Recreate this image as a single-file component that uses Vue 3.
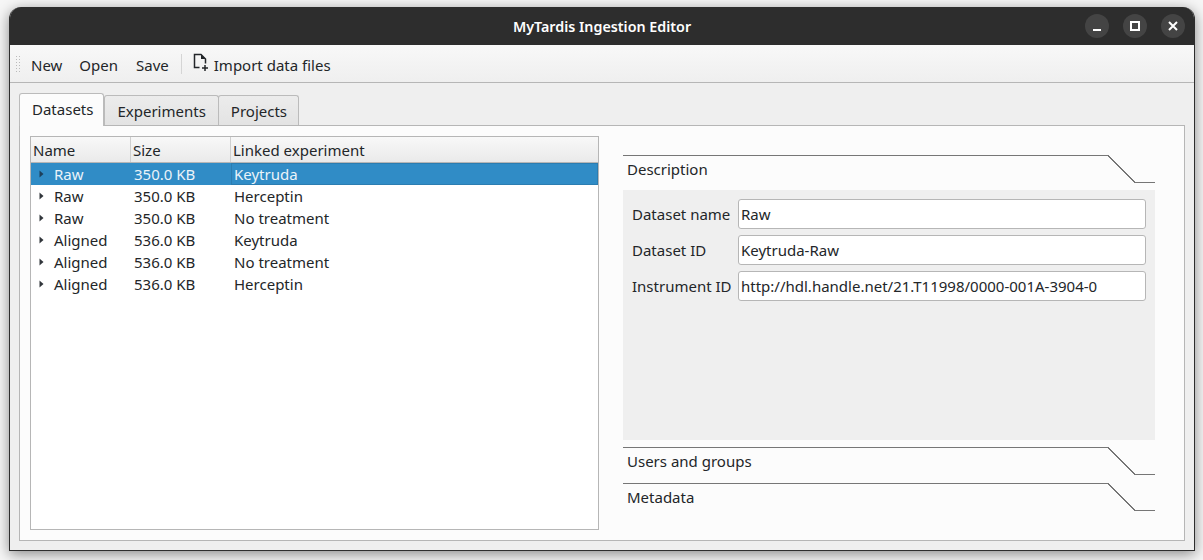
<template>
  <div class="page">
    <div class="window">
      <div class="titlebar">
        <span class="title">MyTardis Ingestion Editor</span>
        <div class="win-buttons">
          <button class="win-btn">
            <svg width="24" height="24" viewBox="0 0 24 24"><rect x="8" y="15" width="8" height="2" fill="#fff" /></svg>
          </button>
          <button class="win-btn">
            <svg width="24" height="24" viewBox="0 0 24 24"><rect x="8" y="8" width="8" height="8" fill="none" stroke="#fff" stroke-width="2" /></svg>
          </button>
          <button class="win-btn">
            <svg width="24" height="24" viewBox="0 0 24 24"><path d="M8 8l8 8M16 8l-8 8" fill="none" stroke="#fff" stroke-width="2" /></svg>
          </button>
        </div>
      </div>

      <div class="toolbar">
        <div class="grip"></div>
        <span class="tool new">New</span>
        <span class="tool open">Open</span>
        <span class="tool">Save</span>
        <div class="tool-sep"></div>
        <svg class="file-icon" width="18" height="18" viewBox="0 0 18 18">
          <path d="M6.5 14.5H1.5V1.5H8L12.5 6V10.5" fill="none" stroke="#232629" stroke-width="1.5" />
          <path d="M8 1.5L12.5 6H8Z" fill="#232629" />
          <path d="M9 15H15M12 12V18" fill="none" stroke="#232629" stroke-width="1.5" />
        </svg>
        <span class="tool import">Import data files</span>
      </div>

      <div class="content">
        <div class="tabs">
          <div
            v-for="tab in tabs"
            :key="tab"
            class="tab"
            :class="{ active: tab === 'Datasets' }"
          >{{ tab }}</div>
        </div>

        <div class="pane">
          <div class="tree">
            <div class="tree-head">
              <div class="col col-name">Name</div>
              <div class="col col-size">Size</div>
              <div class="col col-exp">Linked experiment</div>
            </div>
            <div
              v-for="(row, i) in rows"
              :key="i"
              class="tree-row"
              :class="{ selected: i === 0 }"
            >
              <div class="cell cell-name">
                <svg class="arrow" width="5" height="8" viewBox="0 0 5 8"><path d="M0.5 0.5L4.5 4L0.5 7.5Z" :fill="i === 0 ? '#1d3f5a' : '#31363b'" /></svg>
                {{ row.name }}
              </div>
              <div class="cell cell-size">{{ row.size }}</div>
              <div class="cell cell-exp">{{ row.exp }}</div>
            </div>
          </div>

          <div class="side">
            <div class="section-head">
              <div class="section-title">Description</div>
              <svg class="tail" width="47" height="29" viewBox="0 0 47 29"><path d="M0 0.5L27 27.5H47" fill="none" stroke="#767676" /></svg>
            </div>
            <div class="section-body">
              <div v-for="f in fields" :key="f.label" class="field">
                <label class="field-label">{{ f.label }}</label>
                <input class="field-input" :value="f.value" />
              </div>
            </div>
            <div class="section-head second">
              <div class="section-title">Users and groups</div>
              <svg class="tail" width="47" height="29" viewBox="0 0 47 29"><path d="M0 0.5L27 27.5H47" fill="none" stroke="#767676" /></svg>
            </div>
            <div class="section-head third">
              <div class="section-title">Metadata</div>
              <svg class="tail" width="47" height="29" viewBox="0 0 47 29"><path d="M0 0.5L27 27.5H47" fill="none" stroke="#767676" /></svg>
            </div>
          </div>
        </div>
      </div>
    </div>
  </div>
</template>

<script setup>
const tabs = ['Datasets', 'Experiments', 'Projects']

const rows = [
  { name: 'Raw', size: '350.0 KB', exp: 'Keytruda' },
  { name: 'Raw', size: '350.0 KB', exp: 'Herceptin' },
  { name: 'Raw', size: '350.0 KB', exp: 'No treatment' },
  { name: 'Aligned', size: '536.0 KB', exp: 'Keytruda' },
  { name: 'Aligned', size: '536.0 KB', exp: 'No treatment' },
  { name: 'Aligned', size: '536.0 KB', exp: 'Herceptin' },
]

const fields = [
  { label: 'Dataset name', value: 'Raw' },
  { label: 'Dataset ID', value: 'Keytruda-Raw' },
  { label: 'Instrument ID', value: 'http://hdl.handle.net/21.T11998/0000-001A-3904-0' },
]
</script>

<style>
html,
body {
  margin: 0;
  background: #f6f6f6;
  overflow: hidden;
}
</style>

<style scoped>
.page {
  box-sizing: border-box;
  width: 1203px;
  height: 560px;
  padding: 7px 0 0 9px;
}

.window {
  box-sizing: border-box;
  width: 1186px;
  height: 544px;
  display: flex;
  flex-direction: column;
  background: #efefef;
  border: 1px solid #2d2d2d;
  border-top: 0;
  border-radius: 12px 12px 0 0;
  box-shadow: 0 3px 14px rgba(0, 0, 0, 0.45);
  font-family: "Noto Sans", sans-serif;
  font-size: 15px;
  color: #232629;
  overflow: hidden;
}

.titlebar {
  height: 38px;
  flex: none;
  display: flex;
  align-items: center;
  justify-content: center;
  position: relative;
  background: #2d2d2d;
  margin: 0 -1px;
}

.title {
  color: #fff;
  font-weight: 600;
  font-size: 14.3px;
}

.win-buttons {
  position: absolute;
  right: 10px;
  top: 7px;
  display: flex;
  gap: 14px;
}

.win-btn {
  width: 24px;
  height: 24px;
  padding: 0;
  border: 0;
  border-radius: 50%;
  background: #444444;
}

.win-btn svg {
  display: block;
}

.toolbar {
  height: 38px;
  flex: none;
  box-sizing: border-box;
  display: flex;
  align-items: center;
  padding-left: 5px;
  background: linear-gradient(#f8f8f8, #efefef);
  border-bottom: 1px solid #b6b6b6;
}

.grip {
  width: 5px;
  height: 18px;
  background-image: radial-gradient(#bbbbbb 0.7px, transparent 0.8px);
  background-size: 3px 3px;
}

.tool {
  margin-right: 17px;
  position: relative;
  top: 1px;
}

.tool.new {
  margin-left: 11px;
}

.tool.open {
  margin-right: 18px;
}

.tool.import {
  margin: 0;
}

.tool-sep {
  width: 1px;
  height: 20px;
  background: #d5d5d5;
  margin-right: 11px;
  margin-left: -5px;
}

.file-icon {
  margin-right: 3px;
  position: relative;
  top: -2px;
}

.content {
  flex: 1;
  min-height: 0;
  display: flex;
  flex-direction: column;
  padding: 10px 9px 9px;
}

.tabs {
  display: flex;
  align-items: flex-end;
  height: 33px;
  flex: none;
  position: relative;
  z-index: 1;
  margin-bottom: -1px;
}

.tab {
  box-sizing: border-box;
  height: 30px;
  padding: 5px 12px 0;
  margin-bottom: 1px;
  margin-right: -1px;
  background: linear-gradient(#ececec, #e3e3e3);
  border: 1px solid #bbbbbb;
  border-bottom: 0;
  border-radius: 3px 3px 0 0;
  text-align: center;
}

.tab:last-child {
  padding-right: 11px;
}

.tab.active {
  height: 33px;
  padding: 5px 10px 0 12px;
  margin-bottom: 0;
  margin-right: 0;
  background: #fcfcfc;
}

.pane {
  flex: 1;
  min-height: 0;
  box-sizing: border-box;
  display: flex;
  background: #fcfcfc;
  border: 1px solid #b6b6b6;
  padding: 10px;
}

.tree {
  box-sizing: border-box;
  width: 569px;
  height: 394px;
  flex: none;
  background: #fff;
  border: 1px solid #b6b6b6;
}

.tree-head {
  display: flex;
  height: 26px;
  box-sizing: border-box;
  background: linear-gradient(#f8f8f8, #eaeaea);
  border-bottom: 1px solid #b6b6b6;
}

.col {
  box-sizing: border-box;
  padding: 3px 0 0 2px;
  border-right: 1px solid #cfcfcf;
}

.col-name,
.cell-name {
  width: 100px;
}

.col-size,
.cell-size {
  width: 100px;
}

.col-exp {
  flex: 1;
  border-right: 0;
}

.tree-row {
  display: flex;
  height: 22px;
  align-items: center;
}

.tree-row.selected {
  background: #308cc6;
  color: #eaf3f9;
}

.tree-row.selected .cell-exp {
  flex: 1;
  height: 22px;
  padding-left: 2px;
  border: 1px solid #2b7db1;
  display: flex;
  align-items: center;
}

.cell {
  box-sizing: border-box;
  white-space: nowrap;
}

.cell-name {
  display: flex;
  align-items: center;
  padding-left: 8px;
}

.arrow {
  margin-right: 10px;
}

.cell-size {
  padding-left: 3px;
}

.cell-exp {
  padding-left: 3px;
}

.side {
  width: 532px;
  margin-left: 24px;
  padding-top: 19px;
}

.section-head {
  display: flex;
  height: 35px;
}

.section-head.second {
  margin-top: 7px;
  height: 36px;
}

.section-head.third {
  height: 36px;
}

.section-title {
  flex: 1;
  height: 29px;
  box-sizing: border-box;
  border-top: 1px solid #767676;
  padding: 3px 0 0 4px;
}

.tail {
  flex: none;
  display: block;
  shape-rendering: crispEdges;
}

.section-body {
  box-sizing: border-box;
  height: 250px;
  background: #efefef;
  padding: 9px 9px 0;
  display: flex;
  flex-direction: column;
  gap: 6px;
}

.field {
  display: flex;
  align-items: center;
  height: 30px;
}

.field-label {
  width: 106px;
  flex: none;
  white-space: nowrap;
}

.field-input {
  box-sizing: border-box;
  width: 408px;
  height: 30px;
  padding: 0 2px;
  border: 1px solid #b6b6b6;
  border-radius: 3px;
  background: #fff;
  font: inherit;
  color: #232629;
  outline: none;
}
</style>
